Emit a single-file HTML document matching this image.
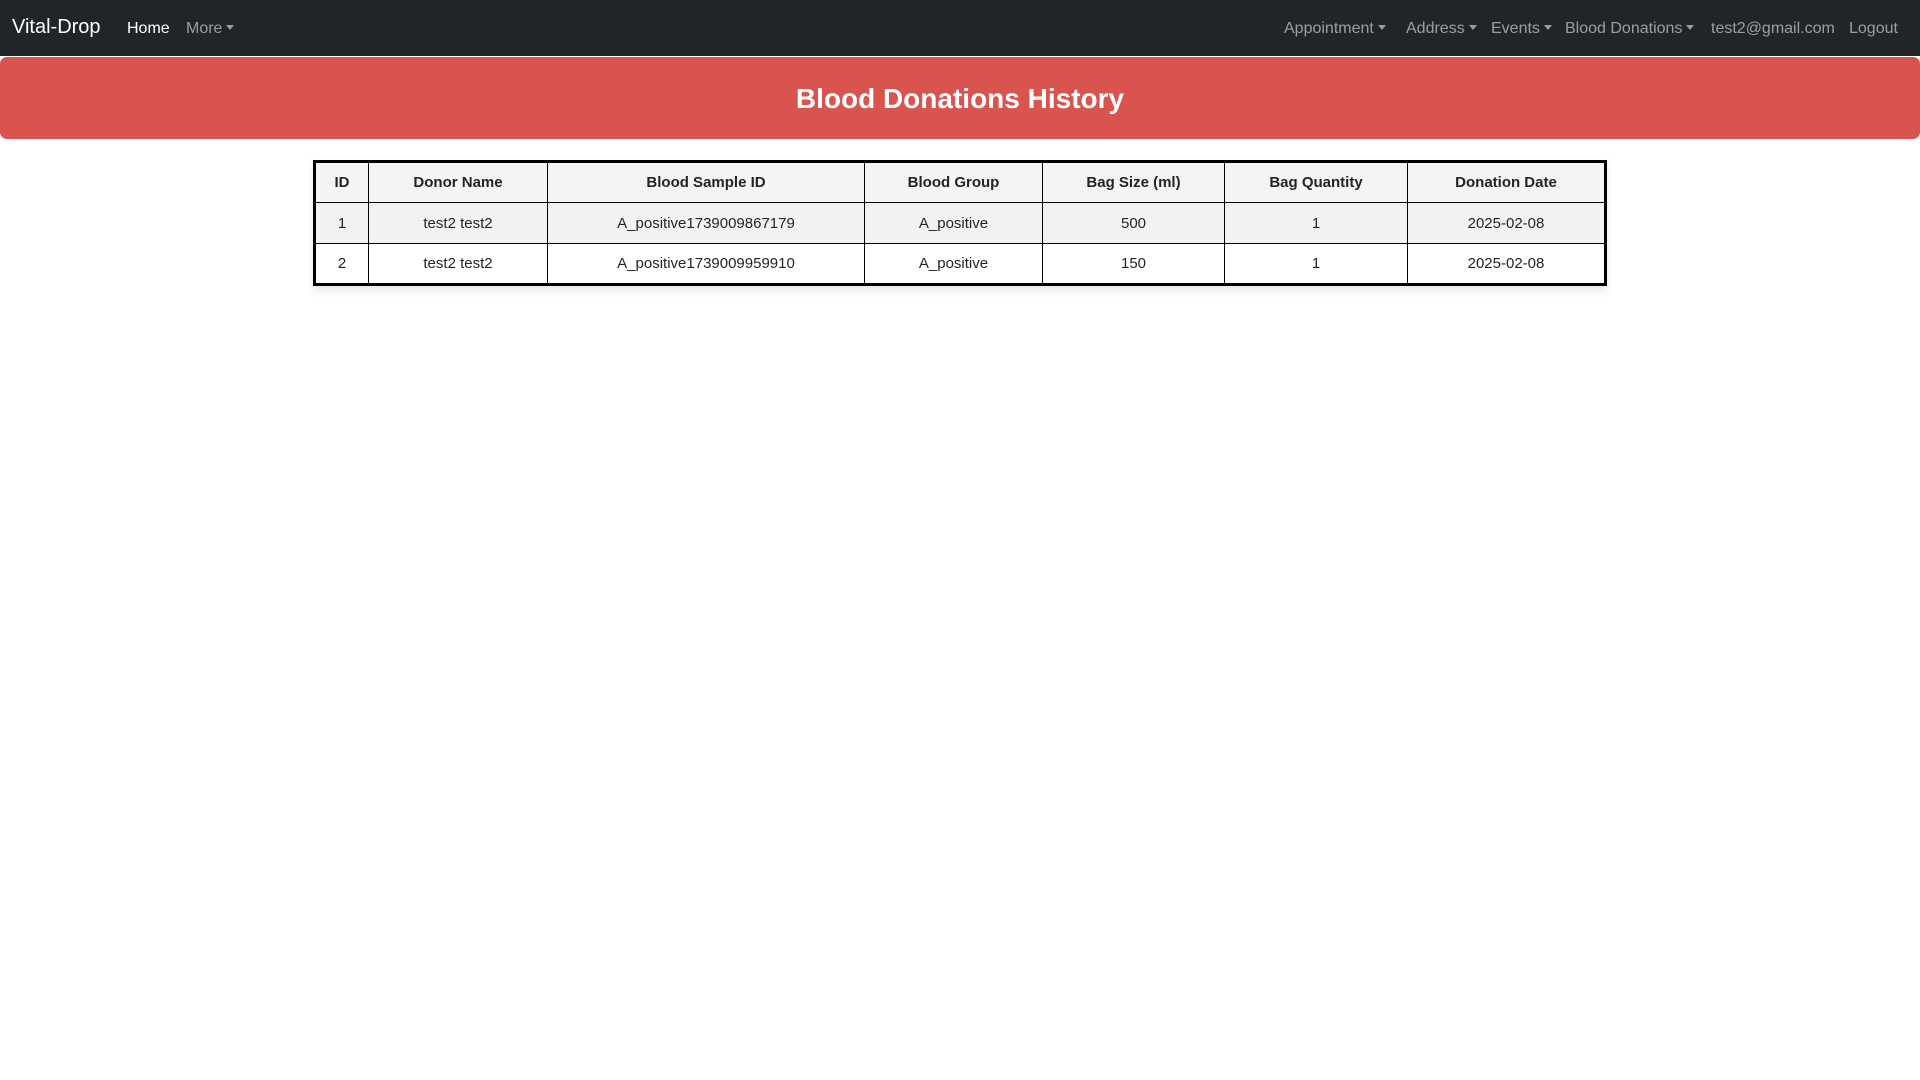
<!DOCTYPE html>
<html><head><meta charset="utf-8">
<style>
*{box-sizing:border-box;margin:0;padding:0}
body{width:1920px;height:1080px;background:#fff;font-family:"Liberation Sans",sans-serif;color:#212529;overflow:hidden;position:relative}
nav{position:absolute;left:0;top:0;width:1920px;height:56px;background:#212529;}
.brand{position:absolute;left:12px;top:16px;font-size:20px;color:#fff}
.n{position:absolute;top:20px;font-size:16px;color:rgba(255,255,255,.55);white-space:nowrap}
.c::after{content:"";display:inline-block;margin-left:4px;vertical-align:3px;border-top:5px solid;border-left:4px solid transparent;border-right:4px solid transparent}
.banner{position:absolute;left:0;top:57px;width:1920px;height:82px;background:#d9534f;border-radius:7px;color:#fff;font-weight:bold;font-size:28px;text-align:center;line-height:84px}
table{position:absolute;left:313px;top:160px;width:1294px;border-collapse:collapse;border:3px solid #000;box-shadow:0 4px 8px rgba(0,0,0,.1);font-size:15px}
td,th{border:1.5px solid #000;text-align:center;height:41px}
th{background:#f4f4f4;font-weight:bold}
tr.s td{background:#f2f2f2}
</style></head><body>
<nav>
<div class="brand">Vital-Drop</div>
<div class="n" style="left:127px;color:#fff">Home</div>
<div class="n c" style="left:186px">More</div>
<div class="n c" style="left:1284px">Appointment</div>
<div class="n c" style="left:1406px">Address</div>
<div class="n c" style="left:1491px">Events</div>
<div class="n c" style="left:1565px">Blood Donations</div>
<div class="n" style="left:1711px">test2@gmail.com</div>
<div class="n" style="left:1849px">Logout</div>
</nav>
<div class="banner">Blood Donations History</div>
<table>
<colgroup><col style="width:54px"><col style="width:179px"><col style="width:317px"><col style="width:178px"><col style="width:182px"><col style="width:183px"><col></colgroup>
<tr><th>ID</th><th>Donor Name</th><th>Blood Sample ID</th><th>Blood Group</th><th>Bag Size (ml)</th><th>Bag Quantity</th><th>Donation Date</th></tr>
<tr class="s"><td>1</td><td>test2 test2</td><td>A_positive1739009867179</td><td>A_positive</td><td>500</td><td>1</td><td>2025-02-08</td></tr>
<tr><td>2</td><td>test2 test2</td><td>A_positive1739009959910</td><td>A_positive</td><td>150</td><td>1</td><td>2025-02-08</td></tr>
</table>
</body></html>
